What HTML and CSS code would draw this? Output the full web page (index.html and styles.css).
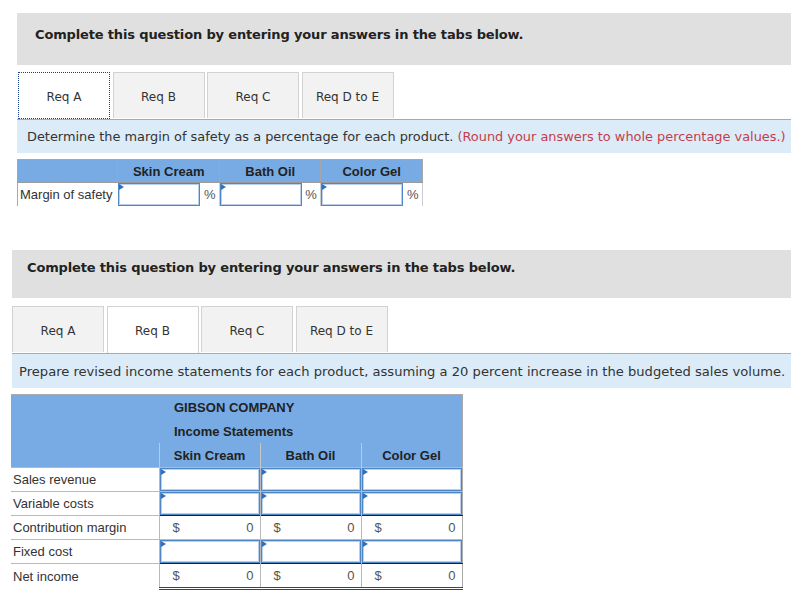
FILE: index.html
```html
<!DOCTYPE html>
<html lang="en">
  <head>
    <meta charset="UTF-8" />
    <meta name="viewport" content="width=device-width, initial-scale=1.0" />
    <title>Margin of Safety</title>
    <link rel="stylesheet" href="styles.css">
  </head>
  <body>
    <div class="question q1">
      <div class="banner">Complete this question by entering your answers in the tabs below.</div>
      <div class="tabs">
        <div class="tab active focus">Req A</div>
        <div class="tab">Req B</div>
        <div class="tab">Req C</div>
        <div class="tab">Req D to E</div>
      </div>
      <div class="prompt">Determine the margin of safety as a percentage for each product. <span class="note">(Round your answers to whole percentage values.)</span></div>

      <table class="mos">
        <colgroup>
          <col class="c-label">
          <col class="c-in"><col class="c-pct">
          <col class="c-in"><col class="c-pct">
          <col class="c-in"><col class="c-pct">
        </colgroup>
        <tr class="head">
          <th></th>
          <th colspan="2">Skin Cream</th>
          <th colspan="2">Bath Oil</th>
          <th colspan="2">Color Gel</th>
        </tr>
        <tr>
          <td class="label">Margin of safety</td>
          <td class="entry"><input type="text"></td><td class="pct">%</td>
          <td class="entry"><input type="text"></td><td class="pct">%</td>
          <td class="entry"><input type="text"></td><td class="pct">%</td>
        </tr>
      </table>
    </div>

    <div class="question q2">
      <div class="banner">Complete this question by entering your answers in the tabs below.</div>
      <div class="tabs">
        <div class="tab">Req A</div>
        <div class="tab active">Req B</div>
        <div class="tab">Req C</div>
        <div class="tab">Req D to E</div>
      </div>
      <div class="prompt">Prepare revised income statements for each product, assuming a 20 percent increase in the budgeted sales volume.</div>

      <table class="income">
        <colgroup>
          <col class="c-label2">
          <col class="c-amt"><col class="c-amt"><col class="c-amt">
        </colgroup>
        <tr class="title">
          <th></th>
          <th colspan="3">GIBSON COMPANY</th>
        </tr>
        <tr class="title">
          <th></th>
          <th colspan="3">Income Statements</th>
        </tr>
        <tr class="cols">
          <th></th>
          <th>Skin Cream</th>
          <th>Bath Oil</th>
          <th>Color Gel</th>
        </tr>
        <tr>
          <td class="label">Sales revenue</td>
          <td class="entry"><input type="text"></td>
          <td class="entry"><input type="text"></td>
          <td class="entry"><input type="text"></td>
        </tr>
        <tr>
          <td class="label">Variable costs</td>
          <td class="entry"><input type="text"></td>
          <td class="entry"><input type="text"></td>
          <td class="entry"><input type="text"></td>
        </tr>
        <tr class="total">
          <td class="label">Contribution margin</td>
          <td class="amt"><span>$</span><span>0</span></td>
          <td class="amt"><span>$</span><span>0</span></td>
          <td class="amt"><span>$</span><span>0</span></td>
        </tr>
        <tr>
          <td class="label">Fixed cost</td>
          <td class="entry"><input type="text"></td>
          <td class="entry"><input type="text"></td>
          <td class="entry"><input type="text"></td>
        </tr>
        <tr class="total final">
          <td class="label">Net income</td>
          <td class="amt"><span>$</span><span>0</span></td>
          <td class="amt"><span>$</span><span>0</span></td>
          <td class="amt"><span>$</span><span>0</span></td>
        </tr>
      </table>
    </div>
  </body>
</html>
```

FILE: styles.css
```css
body {
  margin: 0;
  background: #fff;
  font-family: "DejaVu Sans", Verdana, sans-serif;
  color: #333;
}

.question {
  width: 774px;
}
.q1 {
  margin: 13px 0 0 17px;
}
.q2 {
  margin: 44px 0 0 12px;
  width: 779px;
}

.banner {
  background-color: #e0e0e0;
  font-size: 13px;
  letter-spacing: -0.15px;
  font-weight: bold;
  color: #222;
  line-height: 16px;
}
.q1 .banner {
  height: 52px;
  box-sizing: border-box;
  padding: 14px 18px 0;
}
.q2 .banner {
  height: 48px;
  box-sizing: border-box;
  padding: 10px 15px 0;
}

.tabs {
  display: flex;
  margin-top: 7px;
  border-bottom: 1px solid #aaa;
  height: 47px;
}
.q1 .tabs {
  padding-left: 1px;
}
.q2 .tabs {
  margin-top: 8px;
}
.tab {
  width: 92px;
  flex-shrink: 0;
  height: 46px;
  margin-right: 2.5px;
  border: 1px solid #d2d2d2;
  border-bottom: none;
  background-color: #f2f2f2;
  font-size: 12px;
  color: #333;
  display: flex;
  align-items: center;
  justify-content: center;
  padding-top: 2px;
  box-sizing: border-box;
}
.tab.active {
  background-color: #fff;
  height: 47px;
  margin-bottom: -1px;
}
.tab.focus {
  border: 1px dotted #1a3f8f;
  height: 47px;
  margin-bottom: 0;
}

.prompt {
  background-color: #dcebf8;
  font-size: 12.9px;
  line-height: 16px;
  color: #333;
}
.q1 .prompt {
  padding: 9px 0 8px 10px;
}
.q2 .prompt {
  font-size: 13.1px;
  padding: 10px 0 8px 7px;
}
.note {
  color: #c43d4b;
}

/* shared table bits */
table {
  border-collapse: collapse;
  table-layout: fixed;
  font-family: "Liberation Sans", Arial, sans-serif;
  font-size: 13px;
  color: #333;
}
th {
  background-color: #78abe3;
  color: #222;
  font-weight: bold;
  padding: 0;
}
td {
  padding: 0;
}
.entry {
  position: relative;
}
.entry input {
  display: block;
  width: 100%;
  height: 100%;
  box-sizing: border-box;
  margin: 0;
  border: 1px solid #4f86c6;
  box-shadow: inset 0 0 0 1px #b8d0ee;
  background: #fff;
  outline: none;
}
.entry::before {
  content: "";
  position: absolute;
  left: 1px;
  top: 1px;
  border-top: 3px solid transparent;
  border-bottom: 3px solid transparent;
  border-left: 5px solid #2d6fc0;
}

/* margin of safety table */
.mos {
  margin-top: 6px;
  width: 406px;
}
.c-label { width: 100px; }
.c-in { width: 82px; }
.c-pct { width: 19px; }
.mos th {
  height: 22px;
  border: 1px solid #a6a6a6;
  border-bottom: 1px solid #9a9a9a;
}
.mos td {
  height: 23px;
}
.mos .label {
  border-left: 1px solid #aaa;
  padding-left: 2px;
  white-space: nowrap;
}
.mos .pct {
  border-right: 1px solid #ccc;
  color: #555;
  text-align: center;
}

/* income statement table */
.income {
  margin-top: 6px;
  width: 451px;
  margin-left: -1px;
  border-top: 1px solid #aaa;
  border-right: 1px solid #aaa;
}
.c-label2 { width: 148px; }
.c-amt { width: 101px; }
.income .title th {
  height: 24px;
  text-align: left;
  padding-left: 15px;
}
.income .title th:first-child {
  padding: 0;
}
.income .cols th {
  height: 24px;
  border-left: 1px solid #c7c7c7;
  text-align: center;
}
.income .cols th:first-child {
  border-left: none;
}
.income td {
  height: 23px;
  border-top: 1px solid #b9b9b9;
}
.income .label {
  padding-left: 2px;
  white-space: nowrap;
}
.income .entry {
  border-left: 1px solid #b9b9b9;
}
.income .amt {
  border-left: 1px solid #b9b9b9;
  padding: 0 6px 0 13px;
  color: #555;
}
.income .amt span {
  display: inline-block;
}
.income .amt span:last-child {
  float: right;
}
.income .total .amt {
  border-top: 1px solid #222;
}
.income .final .amt {
  border-bottom: 3px double #444;
}
```
